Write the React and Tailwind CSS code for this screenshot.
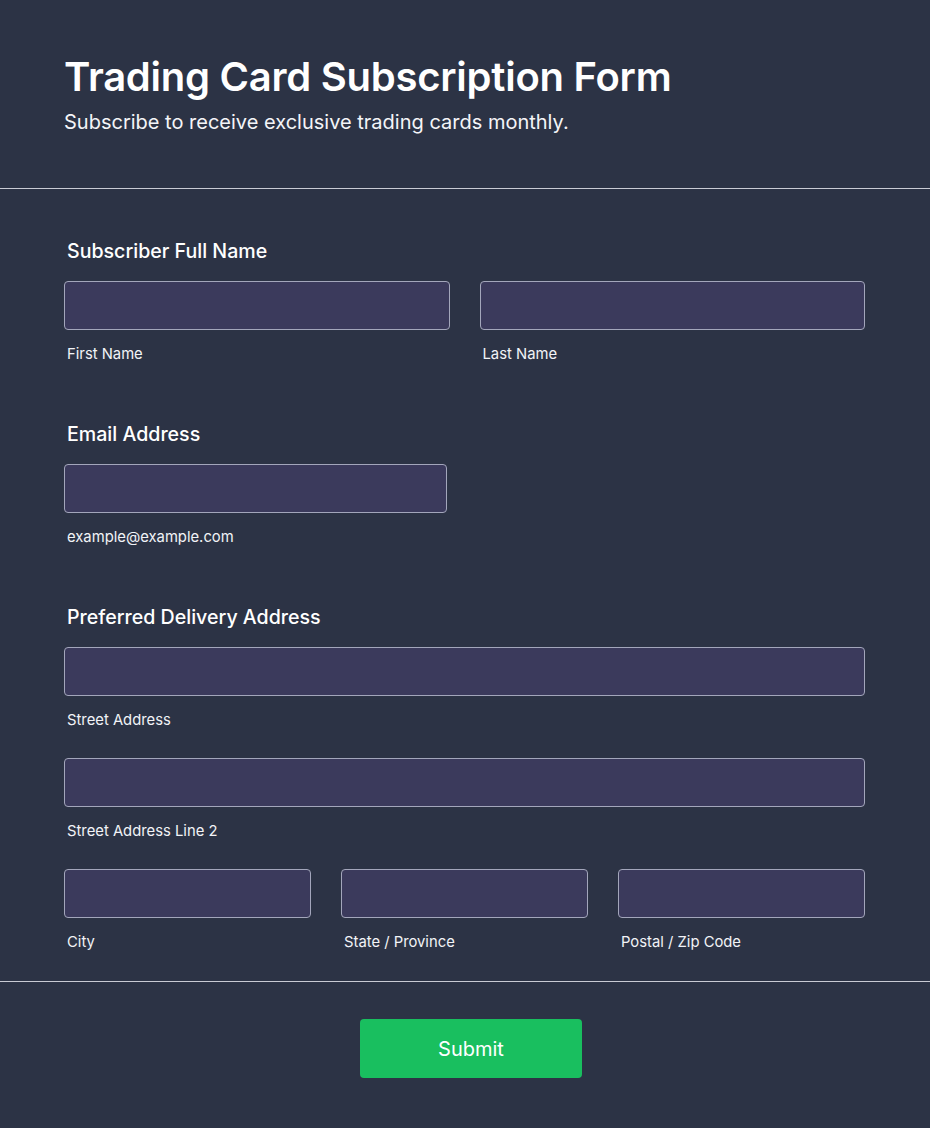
import React from 'react';

const font = { fontFamily: 'Inter, "Noto Sans", sans-serif' };

function Field({ label, className = '' }) {
    return (
        <div className={className}>
            <input
                type="text"
                className="block w-full h-[49px] rounded-[4px] border border-[#a3a6bb] bg-[#3b3a5c] px-3 text-white outline-none"
            />
            <p className="mt-[14px] ml-[3px] text-[14.8px] leading-[20px] text-[#f2f3f7]">{label}</p>
        </div>
    );
}

function SectionLabel({ children }) {
    return (
        <h3 className="ml-[3px] text-[19.6px] leading-[28px] font-medium text-white">{children}</h3>
    );
}

export default function App() {
    return (
        <div className="min-h-screen w-full bg-[#2c3345] text-white" style={font}>
            {/* Header */}
            <div className="px-16 pt-[53px] pb-[52px] border-b border-[#c9cbd4]">
                <h1 className="text-[40px] leading-[48px] font-semibold tracking-[-0.25px]">
                    Trading Card Subscription Form
                </h1>
                <p className="mt-[7px] text-[20px] leading-[28px] text-[#f4f5f8]">
                    Subscribe to receive exclusive trading cards monthly.
                </p>
            </div>

            {/* Form body */}
            <div className="pl-16 pr-[65px] pt-[48px] pb-[29px] border-b border-[#c9cbd4]">
                <SectionLabel>Subscriber Full Name</SectionLabel>
                <div className="mt-4 grid grid-cols-2 gap-x-[30px]">
                    <Field label="First Name" />
                    <Field label="Last Name" />
                </div>

                <div className="mt-[56px]">
                    <SectionLabel>Email Address</SectionLabel>
                    <div className="mt-4 w-[383px]">
                        <Field label="example@example.com" />
                    </div>
                </div>

                <div className="mt-[56px]">
                    <SectionLabel>Preferred Delivery Address</SectionLabel>
                    <div className="mt-4 flex flex-col gap-[28px]">
                        <Field label="Street Address" />
                        <Field label="Street Address Line 2" />
                        <div className="grid grid-cols-3 gap-x-[30px]">
                            <Field label="City" />
                            <Field label="State / Province" />
                            <Field label="Postal / Zip Code" />
                        </div>
                    </div>
                </div>
            </div>

            {/* Submit */}
            <div className="flex justify-center pl-3 pt-[37px] pb-[50px]">
                <button className="w-[222px] h-[59px] rounded-[4px] bg-[#19bf5f] text-[20px] font-normal text-white">
                    Submit
                </button>
            </div>
        </div>
    );
}
